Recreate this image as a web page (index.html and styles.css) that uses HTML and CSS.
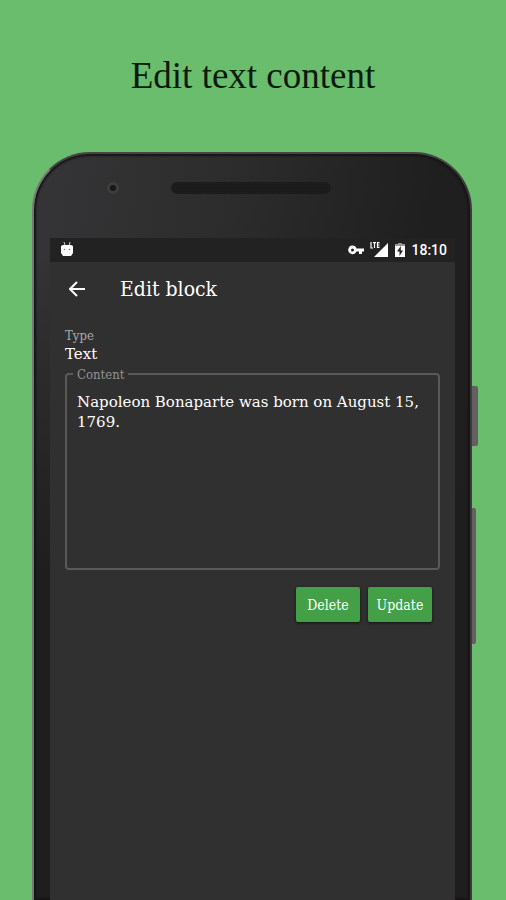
FILE: index.html
```
<!DOCTYPE html>
<html lang="en">
<head>
	<meta charset="utf-8">
	<meta name="viewport" content="width=device-width, initial-scale=1">
	<title>Edit text content</title>
	<link rel="stylesheet" href="styles.css">
</head>
<body>
<h1 class="headline">Edit text content</h1>

<div class="phone">
	<span class="side-key power"></span>
	<span class="side-key volume"></span>

	<div class="phone-top">
		<span class="camera"></span>
		<span class="speaker"></span>
	</div>

	<div class="screen">
		<div class="status-bar">
			<svg class="notification" width="14" height="16" viewBox="0 0 14 16" aria-hidden="true">
				<path d="M4 0l1 3M10 0L9 4" stroke="#ccc" stroke-width="1" fill="none"/>
				<path d="M1 4l2-1h8l2 1v7l-2 3H3l-2-3z" fill="#fff"/>
				<circle cx="4.5" cy="7.5" r=".8" fill="#777"/>
				<circle cx="9.5" cy="7.5" r=".8" fill="#777"/>
			</svg>
			<svg width="16" height="16" viewBox="0 0 16 16" fill="#fff" aria-hidden="true">
				<path fill-rule="evenodd" d="M4.5 3.5a4.3 4.3 0 1 0 4 6H11V12h3V9.5h2v-3H8.5a4.3 4.3 0 0 0-4-3zm0 3a1.5 1.5 0 1 1 0 3 1.5 1.5 0 0 1 0-3z"/>
			</svg>
			<svg class="signal" width="18" height="16" viewBox="0 0 18 16" aria-hidden="true">
				<path d="M18 1v14H4z" fill="#fff"/>
				<path d="M0 0h10v7H0z" fill="#222"/>
				<path d="M1 0v6h2M3 .7h3M4.5 0v6M9.5 .7h-2v4.700h2M7.500 3h2" stroke="#fff" stroke-width="1.2" fill="none"/>
			</svg>
			<svg class="battery" width="10" height="16" viewBox="0 0 10 16" aria-hidden="true">
				<path d="M3 1h4v1.500h3V15H0V2.500h3z" fill="#fff"/>
				<path d="M3 1h4v1.500h3V4H0V2.500h3z" fill="#999"/>
				<path d="M5.800 4L2 9.500h2.500V14L8 8.500H5.800z" fill="#222"/>
			</svg>
			<span class="clock">18:10</span>
		</div>

		<header class="app-bar">
			<button class="back" type="button" aria-label="Back">
				<svg width="16" height="16" viewBox="0 0 16 16" aria-hidden="true">
					<path d="M8 1L1 8l7 7M1 8h15" fill="none" stroke="#fff" stroke-width="2"/>
				</svg>
			</button>
			<h2>Edit block</h2>
		</header>

		<form class="block-form">
			<div class="type-label">Type</div>
			<div class="type-value">Text</div>
			<fieldset class="field">
				<legend><label for="content">Content</label></legend>
				<textarea id="content" spellcheck="false">Napoleon Bonaparte was born on August 15, 1769.</textarea>
			</fieldset>
			<div class="actions">
				<button type="button">Delete</button>
				<button type="button">Update</button>
			</div>
		</form>
	</div>
</div>
</body>
</html>
```
FILE: styles.css
```
* {
	box-sizing: border-box;
}

body {
	display: flex;
	flex-direction: column;
	height: 100vh;
	margin: 0;
	overflow: hidden;
	background: #69bd6c;
	font-family: "DejaVu Serif Condensed", "DejaVu Serif", serif;
}

.headline {
	margin: 0;
	padding: 52px 0;
	color: #0b1a0c;
	font-family: "Liberation Serif", serif;
	font-size: 37px;
	font-weight: 400;
	line-height: 48px;
	text-align: center;
}

/* phone body */
.phone {
	position: relative;
	display: flex;
	flex: 1;
	flex-direction: column;
	margin: 0 34px 0 32px;
	padding: 0 15px 0 16px;
	border: solid #464445;
	border-width: 2px 2px 0;
	border-left-color: #777;
	border-right-color: #3c3a3b;
	border-radius: 58px 58px 0 0;
	background:
		linear-gradient(to bottom, transparent 100px, #1e1e1e 420px),
		linear-gradient(100deg, #353537 0, #2c2c2c 200px, #1f1f1f 400px);
	box-shadow: inset 0 0 2px 2px #161414;
}

.side-key {
	position: absolute;
	left: 100%;
	margin-left: 2px;
	border-radius: 0 2px 2px 0;
	background: #655f64;
}

.power {
	top: 232px;
	width: 6px;
	height: 60px;
}

.volume {
	top: 354px;
	width: 4px;
	height: 136px;
}

.phone-top {
	display: grid;
	grid-template-columns: 1fr 160px 1fr;
	align-items: center;
	height: 84px;
	margin-right: 4px;
	padding-bottom: 16px;
}

.camera {
	justify-self: center;
	width: 12px;
	height: 12px;
	margin-left: 6px;
	border: 3px solid #3d3d3e;
	border-radius: 50%;
	background: #171717;
}

.speaker {
	height: 12px;
	border-radius: 6px;
	background: radial-gradient(#222 1px, #1b1b1b 1px) 0 0 / 3px 3px;
}

.screen {
	flex: 1;
	background: #303030;
	color: #fff;
}

/* status bar */
.status-bar {
	display: flex;
	align-items: center;
	height: 24px;
	padding: 0 8px 0 10px;
	background: #222;
}

.notification {
	margin-right: auto;
}

.signal {
	margin-left: 6px;
}

.battery {
	margin: 0 6px 0 7px;
}

.clock {
	font: 500 14px/24px Roboto, sans-serif;
}

.app-bar {
	display: flex;
	align-items: center;
	height: 54px;
	padding-left: 15px;
}

.app-bar h2 {
	margin: 0 0 0 31px;
	font-size: 21px;
	font-weight: 400;
}

.back {
	display: flex;
	padding: 4px;
	border: 0;
	background: none;
}

/* form */
.block-form {
	padding: 12px 15px;
}

.type-label {
	color: #a9a9a9;
	font-size: 13px;
	line-height: 16px;
}

.type-value {
	font-family: "DejaVu Serif", serif;
	font-size: 15px;
	line-height: 20px;
}

.field {
	min-width: 0;
	margin: 0;
	padding: 0 6px;
	border: 2px solid #595959;
	border-radius: 4px;
}

.field legend {
	padding: 3px 4px 0;
	color: #929292;
	font-size: 13px;
	line-height: 16px;
}

.field textarea {
	display: block;
	width: 100%;
	height: 185px;
	padding: 9px 4px;
	border: 0;
	outline: 0;
	background: none;
	color: #fff;
	font-family: "DejaVu Serif", serif;
	font-size: 15px;
	line-height: 20px;
	resize: none;
}

.actions {
	display: flex;
	justify-content: flex-end;
	gap: 8px;
	padding: 17px 8px;
}

.actions button {
	min-width: 64px;
	height: 35px;
	padding: 0 8px;
	border: 0;
	border-radius: 2px;
	background: #43a047;
	box-shadow: 0 1px 3px #111;
	color: #fff;
	font: inherit;
	font-size: 14px;
}
```
